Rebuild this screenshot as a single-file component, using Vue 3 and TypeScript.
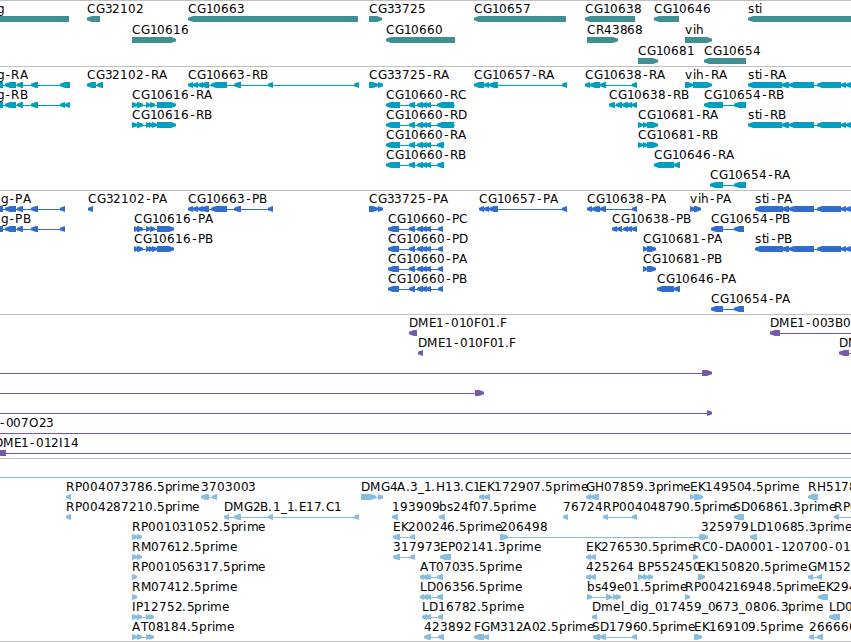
<template>
  <main class="browser">
    <section v-for="track in tracks" :key="track.name" class="track" :class="track.name">
      <svg class="canvas" width="851" :height="track.height" :viewBox="`0 0 851 ${track.height}`">
        <g v-for="(f, i) in track.features" :key="i">
          <rect v-if="f.span" :x="f.span[0]" :y="rowY(track, f) + 18" :width="f.span[1] - f.span[0]" height="1" />
          <polygon v-for="(e, j) in f.exons" :key="j" :points="arrow(e, f.dir, rowY(track, f) + 15)" />
          <text v-if="f.label" :x="glyphXs(f.label, f.x)" :y="rowY(track, f) + 12">{{ f.label }}</text>
        </g>
      </svg>
    </section>
  </main>
</template>

<script setup lang="ts">
type Dir = 'L' | 'R'
type Range = [number, number]
interface Feature { row: number; label: string; x: number; dir: Dir; exons: Range[]; span: Range | null }
interface Track { name: string; height: number; pitch: number; features: Feature[] }

// glyph advances in px for the 12px label font
const ADVANCES: Record<string, number> = {
  A: 8.2, B: 8.1, C: 8.2, D: 9, E: 7.2, F: 6.3, G: 9, H: 9, I: 3.5, K: 7.5, L: 6.6, M: 10.1,
  O: 9.4, P: 7.3, R: 8.3, S: 7.6, T: 7.2, '-': 7.1, '.': 4.2, _: 6,
  b: 7.6, d: 7.6, e: 7.4, f: 4.2, g: 7.6, h: 7.6, i: 3.4, l: 3.4, m: 11.7, p: 7.6, r: 4.9, s: 6.3, t: 4.7, v: 7.1,
}
const DIGIT = 7.85

function glyphXs(label: string, start: number) {
  let x = start + 0.4
  return [...label].map(c => {
    // the hyphen is narrower than its cell, so it sits in the middle
    const at = c === '-' ? x + 1.4 : Math.round(x)
    x += ADVANCES[c] ?? DIGIT
    return at.toFixed(1)
  }).join(' ')
}

function rowY(track: Track, f: Feature) {
  return f.row * track.pitch
}

function arrow([a, b]: Range, dir: Dir, y: number) {
  const head = Math.min(5, b - a)
  return dir === 'L'
    ? `${a},${y + 4.2} ${a},${y + 1.8} ${a + head},${y} ${b},${y} ${b},${y + 6} ${a + head},${y + 6}`
    : `${b},${y + 4.2} ${b},${y + 1.8} ${b - head},${y} ${a},${y} ${a},${y + 6} ${b - head},${y + 6}`
}

function feat(row: number, label: string, dir: Dir, exons: Range[], opts: { x?: number; span?: Range } = {}): Feature {
  const first = exons[0]
  const last = exons[exons.length - 1]
  const span = opts.span ?? (exons.length > 1 ? [first[0], last[1]] as Range : null)
  return { row, label, dir, exons, span, x: opts.x ?? first[0] }
}

const vgCore: Range[] = [[-20, 3], [5, 16], [17, 23], [31, 38]]
const c663: Range[] = [[188, 193], [193, 198], [198, 203], [201, 209], [211, 227], [234, 241]]
const c660: Range[] = [[409, 415], [417, 423], [422, 427], [426, 431]]
const stiTail: Range[] = [[782, 789], [789, 814], [817, 841], [841, 846], [846, 870]]
const at07: Range[] = [[420, 424], [423, 428], [426, 431], [437, 443]]

const tracks: Track[] = [
  {
    name: 'genes', height: 65, pitch: 21,
    features: [
      feat(0, 'vg', 'L', [[-30, 69]], { x: -11 }),
      feat(0, 'CG32102', 'L', [[87, 100]]),
      feat(0, 'CG10663', 'L', [[188, 358]]),
      feat(0, 'CG33725', 'R', [[369, 382]]),
      feat(0, 'CG10657', 'L', [[474, 566]]),
      feat(0, 'CG10638', 'L', [[585, 635]]),
      feat(0, 'CG10646', 'L', [[654, 679]]),
      feat(0, 'sti', 'L', [[748, 900]]),
      feat(1, 'CG10616', 'R', [[132, 176]]),
      feat(1, 'CG10660', 'L', [[386, 455]]),
      feat(1, 'CR43868', 'R', [[587, 618]]),
      feat(1, 'vih', 'R', [[685, 712]]),
      feat(2, 'CG10681', 'R', [[638, 658]]),
      feat(2, 'CG10654', 'L', [[704, 746]]),
    ],
  },
  {
    name: 'transcripts', height: 123, pitch: 20,
    features: [
      feat(0, 'vg-RA', 'L', [...vgCore, [60, 70]], { x: -11 }),
      feat(0, 'CG32102-RA', 'L', [[87, 96], [97, 103]]),
      feat(0, 'CG10663-RB', 'L', [...c663, [268, 273], [354, 359]]),
      feat(0, 'CG33725-RA', 'R', [[369, 378], [378, 383]]),
      feat(0, 'CG10657-RA', 'L', [[474, 484], [484, 489], [489, 498], [562, 567]]),
      feat(0, 'CG10638-RA', 'L', [[585, 590], [590, 600], [600, 606], [632, 637]]),
      feat(0, 'vih-RA', 'R', [[685, 693], [693, 712]]),
      feat(0, 'sti-RA', 'L', [[748, 782], ...stiTail]),
      feat(1, 'vg-RB', 'L', [...vgCore, [60, 65], [65, 70]], { x: -11 }),
      feat(1, 'CG10616-RA', 'R', [[132, 137], [137, 143], [146, 150], [150, 155], [157, 176]]),
      feat(1, 'CG10660-RC', 'L', [[386, 400], ...c660, [437, 454]], { span: [386, 455] }),
      feat(1, 'CG10638-RB', 'L', [[609, 615], [616, 622], [622, 628], [627, 632], [632, 637]]),
      feat(1, 'CG10654-RB', 'L', [[704, 723], [734, 746]]),
      feat(2, 'CG10616-RB', 'R', [[132, 137], [137, 143], [146, 150], [149, 153], [152, 157], [157, 176]]),
      feat(2, 'CG10660-RD', 'L', [[386, 400], ...c660, [437, 454]], { span: [386, 455] }),
      feat(2, 'CG10681-RA', 'R', [[638, 643], [643, 647], [647, 658]]),
      feat(2, 'sti-RB', 'L', [[748, 782], ...stiTail]),
      feat(3, 'CG10660-RA', 'L', [[386, 400], ...c660, [437, 444]]),
      feat(3, 'CG10681-RB', 'R', [[638, 643], [643, 647], [647, 658]]),
      feat(4, 'CG10660-RB', 'L', [[386, 400], ...c660, [437, 444]]),
      feat(4, 'CG10646-RA', 'L', [[654, 674], [674, 680]]),
      feat(5, 'CG10654-RA', 'L', [[710, 723], [734, 746]]),
    ],
  },
  {
    name: 'proteins', height: 123, pitch: 20,
    features: [
      feat(0, 'vg-PA', 'L', [...vgCore, [60, 65]], { x: -7 }),
      feat(0, 'CG32102-PA', 'L', [[88, 93]]),
      feat(0, 'CG10663-PB', 'L', [...c663, [268, 273]]),
      feat(0, 'CG33725-PA', 'R', [[369, 378], [378, 383]]),
      feat(0, 'CG10657-PA', 'L', [[479, 484], [484, 489], [489, 498], [562, 567]]),
      feat(0, 'CG10638-PA', 'L', [[587, 592], [592, 600], [600, 606], [632, 637]]),
      feat(0, 'vih-PA', 'R', [[690, 695], [694, 701]]),
      feat(0, 'sti-PA', 'L', [[755, 783], ...stiTail]),
      feat(1, 'vg-PB', 'L', [...vgCore, [60, 65]], { x: -7 }),
      feat(1, 'CG10616-PA', 'R', [[134, 138], [137, 143], [146, 150], [150, 155], [157, 174]]),
      feat(1, 'CG10660-PC', 'L', [[388, 399], ...c660, [438, 443]]),
      feat(1, 'CG10638-PB', 'L', [[612, 617], [617, 622], [623, 628], [627, 632], [632, 637]]),
      feat(1, 'CG10654-PB', 'L', [[711, 723], [734, 744]]),
      feat(2, 'CG10616-PB', 'R', [[134, 138], [137, 143], [146, 150], [149, 153], [152, 157], [157, 174]]),
      feat(2, 'CG10660-PD', 'L', [[388, 399], ...c660, [438, 443]]),
      feat(2, 'CG10681-PA', 'R', [[643, 647], [647, 656]]),
      feat(2, 'sti-PB', 'L', [[755, 783], ...stiTail]),
      feat(3, 'CG10660-PA', 'L', [[388, 399], ...c660, [438, 443]]),
      feat(3, 'CG10681-PB', 'R', [[643, 647], [647, 656]]),
      feat(4, 'CG10660-PB', 'L', [[388, 399], ...c660, [438, 443]]),
      feat(4, 'CG10646-PA', 'L', [[657, 674], [674, 680]]),
      feat(5, 'CG10654-PA', 'L', [[711, 723], [734, 744]]),
    ],
  },
  {
    name: 'clones', height: 143, pitch: 20,
    features: [
      feat(0, 'DME1-010F01.F', 'L', [[409, 417]]),
      feat(0, 'DME1-003B0', 'L', [[770, 780]], { span: [775, 851] }),
      feat(1, 'DME1-010F01.F', 'L', [[418, 423]]),
      feat(1, 'DM', 'L', [[839, 849]], { span: [845, 851] }),
      feat(2, '', 'R', [[702, 712]], { span: [0, 705] }),
      feat(3, '', 'R', [[475, 484]], { span: [0, 478] }),
      feat(4, '', 'R', [[707, 712]], { span: [0, 710] }),
      feat(5, 'DME1-007O23', 'L', [], { x: -36, span: [0, 851] }),
      feat(6, 'DME1-012I14', 'L', [[-20, 6]], { x: -6, span: [0, 851] }),
    ],
  },
  {
    name: 'ests', height: 182, pitch: 20,
    features: [
      feat(0, '', 'L', [], { x: 0, span: [0, 851] }),
      feat(1, 'RP004073786.5prime', 'L', [[66, 71]]),
      feat(1, '3703003', 'L', [[201, 209], [212, 217]]),
      feat(1, 'DMG4A.3_1.H13.C1', 'R', [[361, 376], [378, 383]]),
      feat(1, 'EK172907.5prime', 'L', [[479, 484], [484, 490]]),
      feat(1, 'GH07859.3prime', 'L', [[586, 591], [591, 599]]),
      feat(1, 'EK149504.5prime', 'R', [[690, 694], [694, 703]]),
      feat(1, 'RH5178', 'L', [[808, 818]]),
      feat(2, 'RP004287210.5prime', 'L', [[66, 71]]),
      feat(2, 'DMG2B.1_1.E17.C1', 'L', [[224, 229], [234, 241], [268, 273], [354, 359]]),
      feat(2, '193909', 'L', [[392, 398]]),
      feat(2, 'bs24f07.5prime', 'L', [[439, 445]]),
      feat(2, '76724', 'L', [[563, 568]]),
      feat(2, 'RP004048790.5prime', 'L', [[603, 608], [632, 637]]),
      feat(2, 'SD06861.3prime', 'L', [[734, 744]], { x: 733 }),
      feat(2, 'RP0', 'L', [[834, 839]], { span: [836, 851] }),
      feat(3, 'RP001031052.5prime', 'R', [[132, 137], [137, 142]]),
      feat(3, 'EK200246.5prime', 'L', [[393, 400], [410, 415]]),
      feat(3, '206498', 'R', [[500, 508], [699, 704]]),
      feat(3, '325979', 'R', [[701, 708]]),
      feat(3, 'LD10685.3prime', 'L', [[750, 757]]),
      feat(4, 'RM07612.5prime', 'R', [[132, 137], [137, 142]]),
      feat(4, '317973', 'L', [[393, 400], [410, 415]]),
      feat(4, 'EP02141.3prime', 'L', [[440, 451]]),
      feat(4, 'EK276530.5prime', 'L', [[586, 591], [591, 596]]),
      feat(4, 'RC0-DA0001-120700-01', 'R', [[693, 698]]),
      feat(5, 'RP001056317.5prime', 'R', [[132, 137]]),
      feat(5, 'AT07035.5prime', 'L', at07),
      feat(5, '425264', 'L', [[586, 591], [591, 596]]),
      feat(5, 'BP552450', 'R', [[638, 643], [643, 648], [648, 653]]),
      feat(5, 'EK150820.5prime', 'R', [[698, 705]]),
      feat(5, 'GM152', 'L', [[808, 813], [817, 822]]),
      feat(6, 'RM07412.5prime', 'R', [[132, 137]]),
      feat(6, 'LD06356.5prime', 'L', at07),
      feat(6, 'bs49e01.5prime', 'R', [[587, 592], [606, 612], [613, 617], [616, 621]]),
      feat(6, 'RP004216948.5prime', 'R', [[685, 690]]),
      feat(6, 'EK294', 'L', [[818, 828]]),
      feat(7, 'IP12752.5prime', 'R', [[132, 137], [137, 142], [146, 150], [149, 154]]),
      feat(7, 'LD16782.5prime', 'L', [[422, 427], [426, 431], [438, 443]]),
      feat(7, 'Dmel_dig_017459_0673_0806.3prime', 'L', [[592, 597]]),
      feat(7, 'LD0', 'L', [[829, 840]]),
      feat(8, 'AT08184.5prime', 'R', [[132, 137], [137, 142], [146, 150], [149, 154]]),
      feat(8, '423892', 'L', [[424, 431], [438, 444]]),
      feat(8, 'FGM312A02.5prime', 'L', [[474, 484], [484, 489]]),
      feat(8, 'SD17960.5prime', 'L', [[593, 600], [600, 606], [632, 637]], { x: 592 }),
      feat(8, 'EK169109.5prime', 'R', [[694, 702]]),
      feat(8, '266660', 'L', [[809, 814], [817, 823]]),
    ],
  },
]
</script>

<style>
body { background: #fff; overflow: hidden; }
</style>

<style scoped>
.browser { display: flex; flex-direction: column; width: 851px; border-bottom: 1px solid #c0c0c0; }
.track { border-top: 1px solid #c0c0c0; }
.canvas { display: block; overflow: hidden; }
.canvas text { font-family: "DejaVu Sans", sans-serif; font-size: 12px; fill: #000; white-space: pre; }
.genes { fill: #408f95; }
.transcripts { fill: #009fc0; }
.proteins { fill: #316dcd; }
.clones { fill: #7759a9; }
.ests { fill: #87bde0; }
</style>
